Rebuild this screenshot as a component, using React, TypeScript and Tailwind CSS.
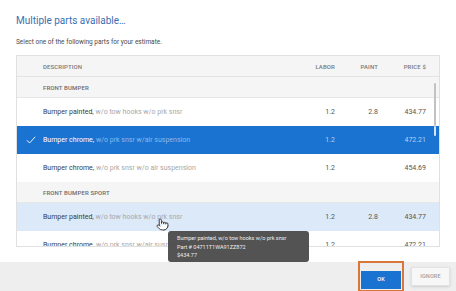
import { Pointer } from 'lucide-react';

type Part = { name: string; spec: string; labor: string; paint: string; price: string };

const FRONT: Part[] = [
  { name: 'Bumper painted,', spec: 'w/o tow hooks w/o prk snsr', labor: '1.2', paint: '2.8', price: '434.77' },
  { name: 'Bumper chrome,', spec: 'w/o prk snsr w/air suspension', labor: '1.2', paint: '', price: '472.21' },
  { name: 'Bumper chrome,', spec: 'w/o prk snsr w/o air suspension', labor: '1.2', paint: '', price: '454.69' },
];

const SPORT: Part[] = [
  { name: 'Bumper painted,', spec: 'w/o tow hooks w/o prk snsr', labor: '1.2', paint: '2.8', price: '434.77' },
  { name: 'Bumper chrome,', spec: 'w/o prk snsr w/air suspension', labor: '1.2', paint: '', price: '472.21' },
];

function GroupRow({ label }: { label: string }) {
  return (
    <div className="h-[21px] shrink-0 flex items-center pl-[26px] bg-[#f5f5f5] border-b border-[#e6e6e6] text-[6px] font-medium tracking-[0.02em] text-[#6b6b6b]">
      {label}
    </div>
  );
}

function PartRow({ part, state }: { part: Part; state?: 'selected' | 'hover' }) {
  const selected = state === 'selected';
  const bg = selected ? 'bg-[#1a73d1]' : state === 'hover' ? 'bg-[#dce9f8]' : 'bg-white';
  const num = selected ? 'text-[#b4d0f2]' : 'text-[#555555]';
  return (
    <div className={`relative h-[28px] shrink-0 flex items-center pl-[26px] pr-[13px] text-[7px] ${bg}`}>
      {selected && (
        <svg className="absolute left-[9px] top-[10px]" width="10" height="8" viewBox="0 0 10 8" fill="none">
          <polyline points="0.8,4.2 3.6,7 9.2,0.8" stroke="#ffffff" strokeWidth="0.9" />
        </svg>
      )}
      <div className="flex-1 min-w-0 truncate">
        <span className={selected ? 'text-white' : 'text-[#3a3a3a]'}>{part.name}</span>{' '}
        <span className={selected ? 'text-[#8fb8ea]' : 'text-[#a8a8a8]'}>{part.spec}</span>
      </div>
      <div className={`w-[40px] text-right ${num}`}>{part.labor}</div>
      <div className={`w-[43px] text-right ${num}`}>{part.paint}</div>
      <div className={`w-[48px] text-right ${num}`}>{part.price}</div>
    </div>
  );
}

export default function App() {
  return (
    <div className="relative w-[456px] h-[291px] overflow-hidden bg-white flex flex-col font-['Roboto','Liberation_Sans',sans-serif]">
      <h1 className="pl-4 pt-[14px] text-[10px] leading-[14px] text-[#3a70b0]">Multiple parts available…</h1>
      <p className="pl-4 mt-[10px] text-[6.5px] leading-[9px] text-[#4a4a4a]">
        Select one of the following parts for your estimate.
      </p>

      {/* parts table */}
      <div className="relative mx-4 mt-[8px] h-[192px] shrink-0 overflow-hidden border border-[#e0e0e0] flex flex-col">
        <div className="h-[21px] shrink-0 flex items-center pl-[26px] pr-[13px] bg-[#f5f5f5] border-b border-[#e3e3e3] text-[6px] font-medium tracking-[0.02em] text-[#7a7a7a]">
          <div className="flex-1">DESCRIPTION</div>
          <div className="w-[40px] text-right">LABOR</div>
          <div className="w-[43px] text-right">PAINT</div>
          <div className="w-[48px] text-right">PRICE $</div>
        </div>
        <GroupRow label="FRONT BUMPER" />
        <PartRow part={FRONT[0]} />
        <PartRow part={FRONT[1]} state="selected" />
        <PartRow part={FRONT[2]} />
        <GroupRow label="FRONT BUMPER SPORT" />
        <PartRow part={SPORT[0]} state="hover" />
        <PartRow part={SPORT[1]} />

        {/* scroll thumb */}
        <div className="absolute right-[3px] top-[27px] w-[2px] h-[43px] rounded-full bg-[#c2c2c2]" />
        <div className="absolute right-[3px] top-[70px] w-[2px] h-[10px] rounded-full bg-[#d6e6f8]" />
      </div>

      <div className="flex-1" />

      {/* footer */}
      <div className="h-[29px] shrink-0 bg-[#eeeeee] flex items-center justify-end pr-[6px] gap-[7px]">
        <div className="border-2 border-[#d8763c] p-px">
          <button className="w-[40px] h-[18px] bg-[#1a73d1] text-white text-[5.5px] font-medium">OK</button>
        </div>
        <button className="w-[39px] h-[19px] bg-[#f7f7f7] border border-[#e2e2e2] shadow-sm text-[#a0a0a0] text-[5.5px] font-medium tracking-[0.03em]">
          IGNORE
        </button>
      </div>

      {/* tooltip */}
      <div className="absolute left-[168px] top-[231px] w-[141px] h-[31px] rounded-[3px] bg-[#4a4a4a]/95 pl-[9px] pt-[3px] text-[5.5px] leading-[8.5px] text-[#eeeeee]">
        <div>Bumper painted, w/o tow hooks w/o prk snsr</div>
        <div>Part # 04711T1WA91ZZ872</div>
        <div>$434.77</div>
      </div>

      {/* cursor */}
      <Pointer className="absolute left-[156px] top-[218px]" size={13} fill="#ffffff" stroke="#222222" strokeWidth={1.6} />
    </div>
  );
}
